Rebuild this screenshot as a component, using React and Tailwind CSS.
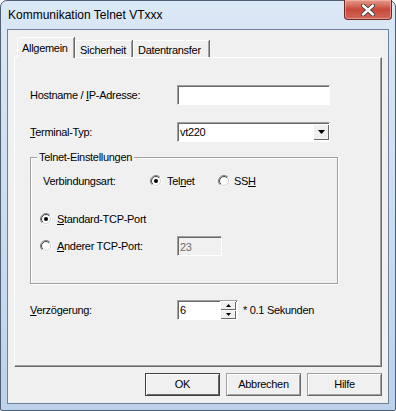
function Radio({ checked }) {
  return (
    <svg width="12" height="12" viewBox="0 0 12 12" className="shrink-0">
      <defs>
        <linearGradient id="rOuter" x1="0" y1="0" x2="1" y2="1">
          <stop offset="0.45" stopColor="#808080" />
          <stop offset="0.55" stopColor="#ffffff" />
        </linearGradient>
        <linearGradient id="rInner" x1="0" y1="0" x2="1" y2="1">
          <stop offset="0.45" stopColor="#404040" />
          <stop offset="0.55" stopColor="#d4d0c8" />
        </linearGradient>
      </defs>
      <circle cx="6" cy="6" r="5.5" fill="none" stroke="url(#rOuter)" strokeWidth="1" />
      <circle cx="6" cy="6" r="4.5" fill="#fff" stroke="url(#rInner)" strokeWidth="1" />
      {checked && <circle cx="6" cy="6" r="2" fill="#000" />}
    </svg>
  )
}

function Button({ children, primary }) {
  return (
    <div
      className={
        "w-[75px] h-[23px] flex items-center justify-center bg-[#f0f0f0] border " +
        (primary
          ? "border-[#404040] shadow-[inset_1px_1px_0_#fff,inset_-1px_-1px_0_#696969]"
          : "border-t-[#a0a0a0] border-l-[#a0a0a0] border-b-[#696969] border-r-[#696969] shadow-[inset_1px_1px_0_#fff,inset_-1px_-1px_0_#a0a0a0]")
      }
    >
      {children}
    </div>
  )
}

const sunken =
  "border border-t-[#a0a0a0] border-l-[#a0a0a0] border-b-white border-r-white shadow-[inset_1px_1px_0_#696969]"

const raised =
  "bg-[#f0f0f0] shadow-[inset_1px_1px_0_#fff,inset_-1px_-1px_0_#696969]"

export default function App() {
  return (
    <div className="w-[396px] h-[411px] font-['Liberation_Sans',Arial,sans-serif] text-[11px] tracking-[-0.3px] text-black">
      <div className="w-full h-full rounded-t-[7px] rounded-b-[2px] border border-[#4f5f74] bg-gradient-to-b from-[#dbe8f6] to-[#bcd2eb] flex flex-col px-[6px] pb-[6px]">
        {/* title bar */}
        <div className="h-[28px] flex justify-between">
          <div className="pt-[6px] pl-[1px] text-[12px] tracking-[0px] leading-[16px]">
            Kommunikation Telnet VTxxx
          </div>
          <div className="-mt-[1px] -mr-[3px] w-[48px] h-[20px] rounded-b-[4px] border border-[#6b2a24] border-t-0 bg-gradient-to-b from-[#e39a8c] via-[#c9483a] to-[#d0685a] flex items-center justify-center shadow-[inset_0_0_0_1px_rgba(255,200,190,0.5)]">
            <svg width="14" height="12" viewBox="0 0 14 12">
              <path d="M2 1.5 L12 10.5 M12 1.5 L2 10.5" stroke="#3a3a3a" strokeWidth="4.2" strokeLinecap="round" />
              <path d="M2 1.5 L12 10.5 M12 1.5 L2 10.5" stroke="#ffffff" strokeWidth="2.4" strokeLinecap="round" />
            </svg>
          </div>
        </div>

        {/* client area */}
        <div className="flex-1 border border-[#6f8196] bg-[#f0f0f0] flex flex-col px-[6px] pt-[7px]">
          {/* tabs */}
          <div className="flex items-end h-[20px] ml-[3px]">
            <div className="relative z-10 -mb-[1px] h-[21px] w-[57px] pl-[4px] pt-[2px] bg-[#f0f0f0] border-t border-l border-white shadow-[inset_-1px_0_0_#a0a0a0,1px_0_0_#696969] rounded-tl-[2px]">
              Allgemein
            </div>
            <div className="h-[17px] w-[57px] ml-[1px] pl-[4px] pt-[1px] border-t border-l border-white shadow-[inset_-1px_0_0_#a0a0a0,1px_0_0_#696969]">
              Sicherheit
            </div>
            <div className="h-[17px] w-[76px] ml-[1px] pl-[4px] pt-[1px] border-t border-l border-white shadow-[inset_-1px_0_0_#a0a0a0,1px_0_0_#696969]">
              Datentransfer
            </div>
          </div>

          {/* panel */}
          <div className="h-[310px] w-[368px] border border-t-white border-l-white border-r-[#696969] border-b-[#696969] shadow-[inset_-1px_-1px_0_#a0a0a0] pl-[15px] flex flex-col">
            <div className="mt-[27px] flex items-center">
              <div className="w-[147px]">
                Hostname / <span className="underline">I</span>P-Adresse:
              </div>
              <div className={"w-[153px] h-[20px] bg-white " + sunken}></div>
            </div>

            <div className="mt-[17px] flex items-center">
              <div className="w-[147px]">
                <span className="underline">T</span>erminal-Typ:
              </div>
              <div className={"w-[153px] h-[20px] bg-white flex items-center " + sunken}>
                <span className="flex-1 pl-[2px] pt-[1px]">vt220</span>
                <div className={"w-[16px] h-[16px] flex items-center justify-center " + raised}>
                  <svg width="7" height="4" viewBox="0 0 7 4">
                    <path d="M0 0 H7 L3.5 4 Z" fill="#000" />
                  </svg>
                </div>
              </div>
            </div>

            <fieldset className="mt-[9px] w-[308px] h-[133px] border border-[#a0a0a0] shadow-[1px_1px_0_#fff,inset_1px_1px_0_#fff] flex flex-col">
              <legend className="ml-[6px] px-[2px] bg-[#f0f0f0] leading-[13px]">Telnet-Einstellungen</legend>
              <div className="mt-[9px] ml-[12px] h-[16px] flex items-center">
                <div className="w-[107px]">Verbindungsart:</div>
                <div className="w-[68px] flex items-center gap-[5px]">
                  <Radio checked />
                  <span>
                    Tel<span className="underline">n</span>et
                  </span>
                </div>
                <div className="flex items-center gap-[4px]">
                  <Radio />
                  <span>
                    SS<span className="underline">H</span>
                  </span>
                </div>
              </div>
              <div className="mt-[22px] ml-[9px] h-[16px] flex items-center gap-[5px]">
                <Radio checked />
                <span>
                  <span className="underline">S</span>tandard-TCP-Port
                </span>
              </div>
              <div className="mt-[9px] ml-[9px] h-[20px] flex items-center">
                <div className="w-[137px] flex items-center gap-[5px]">
                  <Radio />
                  <span>
                    <span className="underline">A</span>nderer TCP-Port:
                  </span>
                </div>
                <div className={"w-[45px] h-[20px] bg-[#f0f0f0] text-[#6d6d6d] pl-[2px] pt-[2px] " + sunken}>23</div>
              </div>
            </fieldset>

            <div className="mt-[16px] flex items-center">
              <div className="w-[147px]">
                <span className="underline">V</span>erzögerung:
              </div>
              <div className={"w-[61px] h-[20px] bg-white flex items-center " + sunken}>
                <span className="flex-1 pl-[2px] pt-[1px]">6</span>
                <div className="w-[16px] h-[18px] flex flex-col mr-[1px]">
                  <div className={"h-[9px] flex items-center justify-center " + raised}>
                    <svg width="5" height="3" viewBox="0 0 5 3">
                      <path d="M0 3 H5 L2.5 0 Z" fill="#000" />
                    </svg>
                  </div>
                  <div className={"h-[9px] flex items-center justify-center " + raised}>
                    <svg width="5" height="3" viewBox="0 0 5 3">
                      <path d="M0 0 H5 L2.5 3 Z" fill="#000" />
                    </svg>
                  </div>
                </div>
              </div>
              <span className="ml-[5px]">* 0.1 Sekunden</span>
            </div>
          </div>

          {/* buttons */}
          <div className="mt-[6px] w-[368px] flex justify-end gap-[6px]">
            <Button primary>OK</Button>
            <Button>Abbrechen</Button>
            <Button>Hilfe</Button>
          </div>
        </div>
      </div>
    </div>
  )
}
